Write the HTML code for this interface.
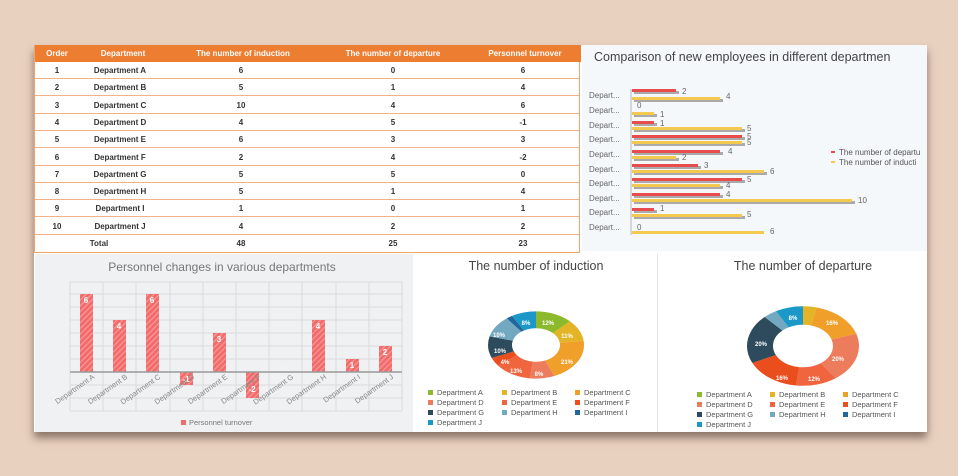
<!DOCTYPE html>
<html><head><meta charset="utf-8"><style>
*{margin:0;padding:0;box-sizing:border-box}
body{width:958px;height:476px;background:#e9d1bf;font-family:"Liberation Sans",sans-serif;position:relative;overflow:hidden}
.panel{position:absolute;left:34px;top:45px;width:893px;height:387px;background:#fff;box-shadow:0 6px 8px rgba(60,40,30,.55)}
.abs{position:absolute}
.tbl{position:absolute;left:34px;top:45px;width:546px;height:208px;border:1px solid #f0a46a;border-top:none}
.hdr{position:absolute;left:0;top:0;width:546px;height:17px;background:#ed7d31;color:#fff;font-size:8px;font-weight:bold}
.row{position:absolute;left:0;width:544px;height:17px;border-bottom:1px solid #f4b183;font-size:8px;font-weight:bold;color:#333}
.c{position:absolute;top:4px;transform:translateX(-50%);white-space:nowrap}
.hdr .c{top:4px}
</style></head><body>
<div class="panel"></div>
<div class="tbl">
<div class="hdr"><span class="c" style="left:22px">Order</span><span class="c" style="left:88px">Department</span><span class="c" style="left:208px">The number of induction</span><span class="c" style="left:358px">The number of departure</span><span class="c" style="left:490px">Personnel turnover</span></div>
<div class="row" style="top:17px"><span class="c" style="left:22px">1</span><span class="c" style="left:85px">Department A</span><span class="c" style="left:206px">6</span><span class="c" style="left:358px">0</span><span class="c" style="left:488px">6</span></div>
<div class="row" style="top:34.3px"><span class="c" style="left:22px">2</span><span class="c" style="left:85px">Department B</span><span class="c" style="left:206px">5</span><span class="c" style="left:358px">1</span><span class="c" style="left:488px">4</span></div>
<div class="row" style="top:51.6px"><span class="c" style="left:22px">3</span><span class="c" style="left:85px">Department C</span><span class="c" style="left:206px">10</span><span class="c" style="left:358px">4</span><span class="c" style="left:488px">6</span></div>
<div class="row" style="top:68.9px"><span class="c" style="left:22px">4</span><span class="c" style="left:85px">Department D</span><span class="c" style="left:206px">4</span><span class="c" style="left:358px">5</span><span class="c" style="left:488px">-1</span></div>
<div class="row" style="top:86.2px"><span class="c" style="left:22px">5</span><span class="c" style="left:85px">Department E</span><span class="c" style="left:206px">6</span><span class="c" style="left:358px">3</span><span class="c" style="left:488px">3</span></div>
<div class="row" style="top:103.5px"><span class="c" style="left:22px">6</span><span class="c" style="left:85px">Department F</span><span class="c" style="left:206px">2</span><span class="c" style="left:358px">4</span><span class="c" style="left:488px">-2</span></div>
<div class="row" style="top:120.8px"><span class="c" style="left:22px">7</span><span class="c" style="left:85px">Department G</span><span class="c" style="left:206px">5</span><span class="c" style="left:358px">5</span><span class="c" style="left:488px">0</span></div>
<div class="row" style="top:138.1px"><span class="c" style="left:22px">8</span><span class="c" style="left:85px">Department H</span><span class="c" style="left:206px">5</span><span class="c" style="left:358px">1</span><span class="c" style="left:488px">4</span></div>
<div class="row" style="top:155.4px"><span class="c" style="left:22px">9</span><span class="c" style="left:85px">Department I</span><span class="c" style="left:206px">1</span><span class="c" style="left:358px">0</span><span class="c" style="left:488px">1</span></div>
<div class="row" style="top:172.7px"><span class="c" style="left:22px">10</span><span class="c" style="left:85px">Department J</span><span class="c" style="left:206px">4</span><span class="c" style="left:358px">2</span><span class="c" style="left:488px">2</span></div>
<div class="row" style="top:190px;border-bottom:none"><span class="c" style="left:64px">Total</span><span class="c" style="left:206px">48</span><span class="c" style="left:358px">25</span><span class="c" style="left:488px">23</span></div>
</div>

<!-- top right bar chart -->
<svg class="abs" style="left:582px;top:45px" width="345" height="206" font-family="Liberation Sans,sans-serif">
<rect width="345" height="206" fill="#f4f8fb"/>
<text x="12" y="16" font-size="12.5" fill="#444">Comparison of new employees in different departmen</text>
<g font-size="8" fill="#666">
<text x="7" y="53">Depart...</text><text x="7" y="68">Depart...</text><text x="7" y="83">Depart...</text><text x="7" y="97">Depart...</text><text x="7" y="112">Depart...</text><text x="7" y="127">Depart...</text><text x="7" y="141">Depart...</text><text x="7" y="156">Depart...</text><text x="7" y="170">Depart...</text><text x="7" y="185">Depart...</text>
</g>
<line x1="49" y1="44" x2="49" y2="190" stroke="#ccc" stroke-width="1.5"/>
<g id="bars"></g>
<!-- bars: y, value, color -->
<g>
<rect x="52" y="46" width="45" height="3" fill="#aaa"/><rect x="50" y="44" width="44" height="3" fill="#e84c4c"/><text x="100" y="49" font-size="8" fill="#666">2</text>
<rect x="52" y="54" width="89" height="3" fill="#aaa"/><rect x="50" y="52" width="88" height="3" fill="#f3c94f"/><text x="144" y="54" font-size="8" fill="#666">4</text>
<text x="55" y="63" font-size="8" fill="#666">0</text>
<rect x="52" y="69" width="23" height="3" fill="#aaa"/><rect x="50" y="67" width="22" height="3" fill="#f3c94f"/><text x="78" y="72" font-size="8" fill="#666">1</text>
<rect x="52" y="78" width="23" height="3" fill="#aaa"/><rect x="50" y="76" width="22" height="3" fill="#e84c4c"/><text x="78" y="81" font-size="8" fill="#666">1</text>
<rect x="52" y="84" width="111" height="3" fill="#aaa"/><rect x="50" y="82" width="110" height="3" fill="#f3c94f"/><text x="165" y="86" font-size="8" fill="#666">5</text>
<rect x="52" y="92" width="111" height="3" fill="#aaa"/><rect x="50" y="90" width="110" height="3" fill="#e84c4c"/><text x="165" y="94" font-size="8" fill="#666">5</text>
<rect x="52" y="98" width="111" height="3" fill="#aaa"/><rect x="50" y="96" width="110" height="3" fill="#f3c94f"/><text x="165" y="100" font-size="8" fill="#666">5</text>
<rect x="52" y="107" width="89" height="3" fill="#aaa"/><rect x="50" y="105" width="88" height="3" fill="#e84c4c"/><text x="146" y="109" font-size="8" fill="#666">4</text>
<rect x="52" y="113" width="45" height="3" fill="#aaa"/><rect x="50" y="111" width="44" height="3" fill="#f3c94f"/><text x="100" y="115" font-size="8" fill="#666">2</text>
<rect x="52" y="121" width="67" height="3" fill="#aaa"/><rect x="50" y="119" width="66" height="3" fill="#e84c4c"/><text x="122" y="123" font-size="8" fill="#666">3</text>
<rect x="52" y="127" width="133" height="3" fill="#aaa"/><rect x="50" y="125" width="132" height="3" fill="#f3c94f"/><text x="188" y="129" font-size="8" fill="#666">6</text>
<rect x="52" y="135" width="111" height="3" fill="#aaa"/><rect x="50" y="133" width="110" height="3" fill="#e84c4c"/><text x="165" y="137" font-size="8" fill="#666">5</text>
<rect x="52" y="141" width="89" height="3" fill="#aaa"/><rect x="50" y="139" width="88" height="3" fill="#f3c94f"/><text x="144" y="143" font-size="8" fill="#666">4</text>
<rect x="52" y="150" width="89" height="3" fill="#aaa"/><rect x="50" y="148" width="88" height="3" fill="#e84c4c"/><text x="144" y="152" font-size="8" fill="#666">4</text>
<rect x="52" y="156" width="221" height="3" fill="#aaa"/><rect x="50" y="154" width="220" height="3" fill="#f3c94f"/><text x="276" y="158" font-size="8" fill="#666">10</text>
<rect x="52" y="165" width="23" height="3" fill="#aaa"/><rect x="50" y="163" width="22" height="3" fill="#e84c4c"/><text x="78" y="166" font-size="8" fill="#666">1</text>
<rect x="52" y="171" width="111" height="3" fill="#aaa"/><rect x="50" y="169" width="110" height="3" fill="#f3c94f"/><text x="165" y="172" font-size="8" fill="#666">5</text>
<text x="55" y="185" font-size="8" fill="#666">0</text>
<rect x="50" y="186" width="132" height="3" fill="#f3c94f"/><text x="188" y="189" font-size="8" fill="#666">6</text>
</g>
<rect x="249" y="106" width="4" height="2" fill="#e84c4c"/><text x="257" y="110" font-size="8" fill="#555">The number of departu</text>
<rect x="249" y="116" width="4" height="2" fill="#f3c94f"/><text x="257" y="120" font-size="8" fill="#555">The number of inducti</text>
</svg>

<!-- bottom left column chart -->
<svg class="abs" style="left:35px;top:254px" width="378" height="178" font-family="Liberation Sans,sans-serif">
<defs><pattern id="h" width="4" height="4" patternUnits="userSpaceOnUse" patternTransform="rotate(45)"><rect width="4" height="4" fill="#f36a6a"/><rect width="1.2" height="4" fill="#f89a9a"/></pattern></defs>
<rect width="378" height="178" fill="#f0f1f3"/>
<text x="187" y="17" font-size="12" fill="#777" text-anchor="middle">Personnel changes in various departments</text>
<g stroke="#dcdcdc" stroke-width="1">
<line x1="35" y1="28" x2="367" y2="28"/><line x1="35" y1="40" x2="367" y2="40"/><line x1="35" y1="53" x2="367" y2="53"/><line x1="35" y1="66" x2="367" y2="66"/><line x1="35" y1="79" x2="367" y2="79"/><line x1="35" y1="92" x2="367" y2="92"/><line x1="35" y1="105" x2="367" y2="105"/><line x1="35" y1="131" x2="367" y2="131"/><line x1="35" y1="144" x2="367" y2="144"/><line x1="35" y1="157" x2="367" y2="157"/>
<line x1="35" y1="28" x2="35" y2="157"/><line x1="68" y1="28" x2="68" y2="157"/><line x1="101" y1="28" x2="101" y2="157"/><line x1="135" y1="28" x2="135" y2="157"/><line x1="168" y1="28" x2="168" y2="157"/><line x1="201" y1="28" x2="201" y2="157"/><line x1="234" y1="28" x2="234" y2="157"/><line x1="267" y1="28" x2="267" y2="157"/><line x1="301" y1="28" x2="301" y2="157"/><line x1="334" y1="28" x2="334" y2="157"/><line x1="367" y1="28" x2="367" y2="157"/>
</g>
<rect x="45" y="40" width="13" height="78" fill="url(#h)"/>
<rect x="78" y="66" width="13" height="52" fill="url(#h)"/>
<rect x="111" y="40" width="13" height="78" fill="url(#h)"/>
<rect x="145" y="118" width="13" height="13" fill="url(#h)"/>
<rect x="178" y="79" width="13" height="39" fill="url(#h)"/>
<rect x="211" y="118" width="13" height="26" fill="url(#h)"/>
<rect x="277" y="66" width="13" height="52" fill="url(#h)"/>
<rect x="311" y="105" width="13" height="13" fill="url(#h)"/>
<rect x="344" y="92" width="13" height="26" fill="url(#h)"/>
<line x1="35" y1="118" x2="367" y2="118" stroke="#999" stroke-width="1.5"/>
<g font-size="8" font-weight="bold" fill="#fff" text-anchor="middle">
<text x="51" y="49">6</text><text x="84" y="75">4</text><text x="117" y="49">6</text><text x="151" y="128">-1</text><text x="184" y="88">3</text><text x="217" y="138">-2</text><text x="250" y="117" fill="#f4f4f4">0</text><text x="283" y="75">4</text><text x="317" y="114">1</text><text x="350" y="101">2</text>
</g>
<g font-size="7.5" fill="#888" text-anchor="end">
<text transform="translate(60,124) rotate(-35)">Department A</text>
<text transform="translate(93,124) rotate(-35)">Department B</text>
<text transform="translate(126,124) rotate(-35)">Department C</text>
<text transform="translate(160,124) rotate(-35)">Department D</text>
<text transform="translate(193,124) rotate(-35)">Department E</text>
<text transform="translate(226,124) rotate(-35)">Department F</text>
<text transform="translate(259,124) rotate(-35)">Department G</text>
<text transform="translate(292,124) rotate(-35)">Department H</text>
<text transform="translate(326,124) rotate(-35)">Department I</text>
<text transform="translate(359,124) rotate(-35)">Department J</text>
</g>
<rect x="146" y="166" width="5" height="5" fill="#f36a6a"/><text x="154" y="171" font-size="7.5" fill="#777">Personnel turnover</text>
</svg>

<!-- induction donut -->
<svg class="abs" style="left:415px;top:254px" width="243" height="178" font-family="Liberation Sans,sans-serif">
<rect width="243" height="178" fill="#fff"/>
<line x1="242.5" y1="0" x2="242.5" y2="178" stroke="#e3e3e3"/>
<text x="121" y="16" font-size="12.5" fill="#444" text-anchor="middle">The number of induction</text>
<g transform="translate(121,91) scale(1,0.7) rotate(-90)" fill="none" stroke-width="24">
<circle r="36" pathLength="100" stroke="#8cba2c" stroke-dasharray="12.5 100" stroke-dashoffset="0"/>
<circle r="36" pathLength="100" stroke="#e2b426" stroke-dasharray="10.42 100" stroke-dashoffset="-12.5"/>
<circle r="36" pathLength="100" stroke="#f0a02a" stroke-dasharray="20.83 100" stroke-dashoffset="-22.92"/>
<circle r="36" pathLength="100" stroke="#ec7c5c" stroke-dasharray="8.33 100" stroke-dashoffset="-43.75"/>
<circle r="36" pathLength="100" stroke="#f0653e" stroke-dasharray="12.5 100" stroke-dashoffset="-52.08"/>
<circle r="36" pathLength="100" stroke="#ea4e1c" stroke-dasharray="4.17 100" stroke-dashoffset="-64.58"/>
<circle r="36" pathLength="100" stroke="#2d4b5c" stroke-dasharray="10.42 100" stroke-dashoffset="-68.75"/>
<circle r="36" pathLength="100" stroke="#72a9c0" stroke-dasharray="10.42 100" stroke-dashoffset="-79.17"/>
<circle r="36" pathLength="100" stroke="#20689c" stroke-dasharray="2.08 100" stroke-dashoffset="-89.58"/>
<circle r="36" pathLength="100" stroke="#1c98c8" stroke-dasharray="8.33 100" stroke-dashoffset="-91.67"/>
</g>
<g font-size="6" font-weight="bold" fill="#fff" text-anchor="middle">
<text x="133" y="71">12%</text><text x="152" y="84">11%</text><text x="152" y="110">21%</text><text x="124" y="122">8%</text><text x="101" y="119">13%</text><text x="90" y="110">4%</text><text x="85" y="99">10%</text><text x="84" y="83">10%</text><text x="111" y="71">8%</text>
</g>
<g font-size="7.5" fill="#555">
<rect x="13" y="136" width="5" height="5" fill="#8cba2c"/><text x="22" y="141">Department A</text>
<rect x="87" y="136" width="5" height="5" fill="#e2b426"/><text x="96" y="141">Department B</text>
<rect x="160" y="136" width="5" height="5" fill="#f0a02a"/><text x="169" y="141">Department C</text>
<rect x="13" y="146" width="5" height="5" fill="#ec7c5c"/><text x="22" y="151">Department D</text>
<rect x="87" y="146" width="5" height="5" fill="#f0653e"/><text x="96" y="151">Department E</text>
<rect x="160" y="146" width="5" height="5" fill="#ea4e1c"/><text x="169" y="151">Department F</text>
<rect x="13" y="156" width="5" height="5" fill="#2d4b5c"/><text x="22" y="161">Department G</text>
<rect x="87" y="156" width="5" height="5" fill="#72a9c0"/><text x="96" y="161">Department H</text>
<rect x="160" y="156" width="5" height="5" fill="#20689c"/><text x="169" y="161">Department I</text>
<rect x="13" y="166" width="5" height="5" fill="#1c98c8"/><text x="22" y="171">Department J</text>
</g>
</svg>

<!-- departure donut -->
<svg class="abs" style="left:659px;top:254px" width="268" height="178" font-family="Liberation Sans,sans-serif">
<rect width="268" height="178" fill="#fff"/>
<text x="144" y="16" font-size="12.5" fill="#444" text-anchor="middle">The number of departure</text>
<g transform="translate(144,92) scale(1,0.71) rotate(-90)" fill="none" stroke-width="26">
<circle r="43" pathLength="100" stroke="#e2b426" stroke-dasharray="4 100" stroke-dashoffset="0"/>
<circle r="43" pathLength="100" stroke="#f0a02a" stroke-dasharray="16 100" stroke-dashoffset="-4"/>
<circle r="43" pathLength="100" stroke="#ec7c5c" stroke-dasharray="20 100" stroke-dashoffset="-20"/>
<circle r="43" pathLength="100" stroke="#f0653e" stroke-dasharray="12 100" stroke-dashoffset="-40"/>
<circle r="43" pathLength="100" stroke="#ea4e1c" stroke-dasharray="16 100" stroke-dashoffset="-52"/>
<circle r="43" pathLength="100" stroke="#2d4b5c" stroke-dasharray="20 100" stroke-dashoffset="-68"/>
<circle r="43" pathLength="100" stroke="#72a9c0" stroke-dasharray="4 100" stroke-dashoffset="-88"/>
<circle r="43" pathLength="100" stroke="#1c98c8" stroke-dasharray="8 100" stroke-dashoffset="-92"/>
</g>
<g font-size="6" font-weight="bold" fill="#fff" text-anchor="middle">
<text x="173" y="71">16%</text><text x="179" y="107">20%</text><text x="155" y="127">12%</text><text x="123" y="126">16%</text><text x="102" y="92">20%</text><text x="134" y="66">8%</text>
</g>
<g font-size="7.5" fill="#555">
<rect x="38" y="138" width="5" height="5" fill="#8cba2c"/><text x="47" y="143">Department A</text>
<rect x="111" y="138" width="5" height="5" fill="#e2b426"/><text x="120" y="143">Department B</text>
<rect x="184" y="138" width="5" height="5" fill="#f0a02a"/><text x="193" y="143">Department C</text>
<rect x="38" y="148" width="5" height="5" fill="#ec7c5c"/><text x="47" y="153">Department D</text>
<rect x="111" y="148" width="5" height="5" fill="#f0653e"/><text x="120" y="153">Department E</text>
<rect x="184" y="148" width="5" height="5" fill="#ea4e1c"/><text x="193" y="153">Department F</text>
<rect x="38" y="158" width="5" height="5" fill="#2d4b5c"/><text x="47" y="163">Department G</text>
<rect x="111" y="158" width="5" height="5" fill="#72a9c0"/><text x="120" y="163">Department H</text>
<rect x="184" y="158" width="5" height="5" fill="#20689c"/><text x="193" y="163">Department I</text>
<rect x="38" y="168" width="5" height="5" fill="#1c98c8"/><text x="47" y="173">Department J</text>
</g>
</svg>
</body></html>
